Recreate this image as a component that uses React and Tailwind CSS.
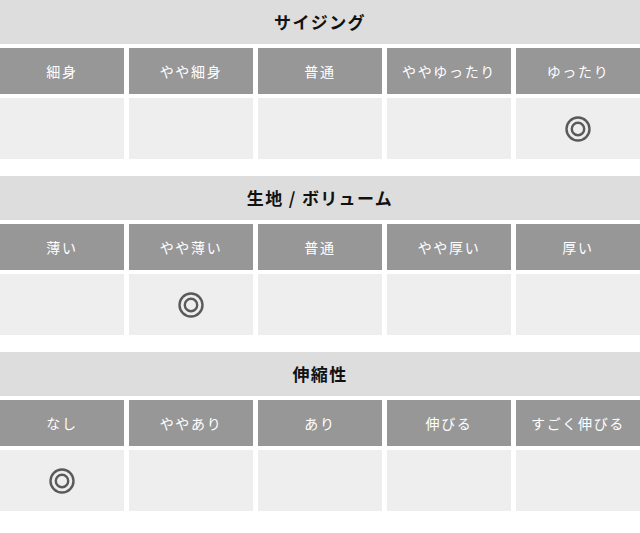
const sections = [
  {
    title: "サイジング",
    options: ["細身", "やや細身", "普通", "ややゆったり", "ゆったり"],
    selected: 4,
  },
  {
    title: "生地 / ボリューム",
    options: ["薄い", "やや薄い", "普通", "やや厚い", "厚い"],
    selected: 1,
  },
  {
    title: "伸縮性",
    options: ["なし", "ややあり", "あり", "伸びる", "すごく伸びる"],
    selected: 0,
  },
];

const DoubleCircle = () => (
  <svg width="28" height="28" viewBox="0 0 28 28" fill="none">
    <circle cx="14" cy="14" r="11.5" stroke="#5a5a5a" strokeWidth="2.4" />
    <circle cx="14" cy="14" r="6.2" stroke="#5a5a5a" strokeWidth="2.4" />
  </svg>
);

const Section = ({ title, options, selected }) => (
  <div className="mb-[17px]">
    <div className="h-[44px] bg-[#dddddd] flex items-center justify-center text-[17px] font-bold tracking-[0.08em] text-[#111]">
      {title}
    </div>
    <div className="grid grid-cols-5 gap-x-[5px] mt-[4px]">
      {options.map((o) => (
        <div
          key={o}
          className="h-[46px] bg-[#979797] flex items-center justify-center text-white text-[14px] tracking-[0.12em]"
        >
          {o}
        </div>
      ))}
    </div>
    <div className="grid grid-cols-5 gap-x-[5px] mt-[4px]">
      {options.map((o, i) => (
        <div key={o} className="h-[61px] bg-[#eeeeee] flex items-center justify-center">
          {i === selected && <DoubleCircle />}
        </div>
      ))}
    </div>
  </div>
);

export default function App() {
  return (
    <div
      className="w-[640px] bg-white"
      style={{ fontFamily: '"Noto Sans CJK JP", "Noto Sans", sans-serif' }}
    >
      {sections.map((s) => (
        <Section key={s.title} {...s} />
      ))}
    </div>
  );
}
